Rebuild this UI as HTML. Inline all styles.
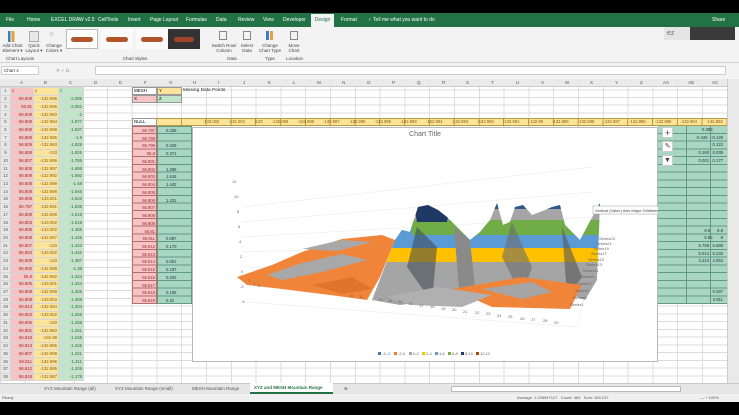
<!DOCTYPE html>
<html><head><meta charset="utf-8"><style>
*{margin:0;padding:0;box-sizing:border-box}
body{width:739px;height:415px;overflow:hidden;background:#000;font-family:"Liberation Sans",sans-serif;position:relative}
.a{position:absolute}
.tab{position:absolute;top:13px;height:14px;color:#fff;font-size:5px;line-height:14px}
.rb{position:absolute;top:27px;left:0;width:739px;height:36px;background:#f3f3f3;border-bottom:1px solid #d4d4d4}
.rl{position:absolute;font-size:4.5px;color:#444;text-align:center;line-height:5px}
.grid{position:absolute;left:0;top:79px;width:727px;height:304px;background:#fff}
table{border-collapse:collapse;position:absolute;left:0;top:87px}
td{height:7.73px;font-size:4.3px;line-height:6px;text-align:right;padding:0 1px;border:1px solid #d6d6d6;white-space:nowrap;overflow:hidden}
td.h{width:10px;background:#e8e8e8;color:#555;text-align:center;padding:0}
td.x{width:23px;background:#f6c4c4;color:#9c2a2a}
td.y{width:25px;background:#fde49b;color:#8a5a00}
td.z{width:25px;background:#c2e4c8;color:#2e6a3a}
</style></head><body>
<div class="a" style="left:0;top:13px;width:739px;height:14px;background:#217346"></div>
<div class="tab" style="left:6px">File</div>
<div class="tab" style="left:27px">Home</div>
<div class="tab" style="left:51px">EXCEL DRAW v2.5</div>
<div class="tab" style="left:98px">CellTools</div>
<div class="tab" style="left:128px">Insert</div>
<div class="tab" style="left:150px">Page Layout</div>
<div class="tab" style="left:186px">Formulas</div>
<div class="tab" style="left:216px">Data</div>
<div class="tab" style="left:238px">Review</div>
<div class="tab" style="left:263px">View</div>
<div class="tab" style="left:283px">Developer</div>
<div class="a" style="left:311px;top:14px;width:23px;height:13px;background:#f3f3f3;color:#217346;font-size:5px;line-height:13px;text-align:center">Design</div>
<div class="tab" style="left:341px">Format</div>
<div class="tab" style="left:368px">♀ Tell me what you want to do</div>
<div class="tab" style="left:712px">Share</div>
<div class="rb"></div>
<div class="a" style="left:8px;top:31px;width:9px;height:11px;background:linear-gradient(90deg,#3a7fc4 30%,#f3f3f3 30%,#f3f3f3 40%,#e6a23c 40%,#e6a23c 70%,#f3f3f3 70%)"></div>
<div class="rl" style="left:0;top:43px;width:25px">Add Chart<br>Element ▾</div>
<div class="a" style="left:29px;top:31px;width:10px;height:11px;border:1px solid #aaa;background:#e8e8e8"></div>
<div class="rl" style="left:24px;top:43px;width:20px">Quick<br>Layout ▾</div>
<div class="a" style="left:48px;top:30px;width:12px;height:12px;color:#4472c4;font-size:8px">⁘</div>
<div class="rl" style="left:43px;top:43px;width:22px">Change<br>Colors ▾</div>
<div class="a" style="left:66px;top:29px;width:32px;height:20px;background:#fff;border:1px solid #bbb"></div>
<div class="a" style="left:71px;top:37px;width:22px;height:5px;background:#b0562a;border-radius:3px"></div>
<div class="a" style="left:101px;top:29px;width:32px;height:20px;background:#fafafa"></div>
<div class="a" style="left:106px;top:37px;width:22px;height:5px;background:#b0562a;border-radius:3px"></div>
<div class="a" style="left:136px;top:29px;width:32px;height:20px;background:#fafafa"></div>
<div class="a" style="left:141px;top:37px;width:22px;height:5px;background:#b0562a;border-radius:3px"></div>
<div class="a" style="left:168px;top:29px;width:32px;height:20px;background:#333"></div>
<div class="a" style="left:174px;top:37px;width:20px;height:5px;background:#a0422a;border-radius:3px"></div>
<div class="rl" style="left:110px;top:56px;width:50px">Chart Styles</div>
<div class="rl" style="left:0;top:56px;width:40px">Chart Layouts</div>
<div class="a" style="left:219px;top:31px;width:8px;height:9px;border:1px solid #888"></div>
<div class="rl" style="left:209px;top:43px;width:30px">Switch Row/<br>Column</div>
<div class="a" style="left:243px;top:31px;width:8px;height:9px;border:1px solid #888"></div>
<div class="rl" style="left:237px;top:43px;width:20px">Select<br>Data</div>
<div class="rl" style="left:222px;top:56px;width:20px">Data</div>
<div class="a" style="left:266px;top:31px;width:7px;height:9px;background:linear-gradient(90deg,#3a7fc4 40%,#f3f3f3 40%,#f3f3f3 60%,#e6a23c 60%)"></div>
<div class="rl" style="left:256px;top:43px;width:28px">Change<br>Chart Type</div>
<div class="rl" style="left:260px;top:56px;width:20px">Type</div>
<div class="a" style="left:290px;top:31px;width:8px;height:9px;border:1px solid #888"></div>
<div class="rl" style="left:284px;top:43px;width:20px">Move<br>Chart</div>
<div class="rl" style="left:282px;top:56px;width:25px">Location</div>
<div class="a" style="left:664px;top:27px;width:26px;height:13px;background:#e4e4e4;font-size:7px;color:#666;line-height:13px;padding-left:3px">ez</div>
<div class="a" style="left:690px;top:27px;width:45px;height:13px;background:#3a3a3a"></div>
<div class="a" style="left:0;top:63px;width:739px;height:16px;background:#f3f3f3"></div>
<div class="a" style="left:1px;top:66px;width:38px;height:9px;background:#fff;border:1px solid #ccc;font-size:4.5px;line-height:8px;padding-left:2px;color:#333">Chart 4</div>
<div class="a" style="left:56px;top:68px;font-size:4.5px;color:#888">✕ ✓ fx</div>
<div class="a" style="left:95px;top:66px;width:631px;height:9px;background:#fff;border:1px solid #ccc"></div>
<div class="grid" style="background-color:#fff;background-image:repeating-linear-gradient(90deg,transparent 0,transparent 23.8px,#dcdcdc 23.8px,#dcdcdc 24.8px),repeating-linear-gradient(0deg,transparent 0,transparent 6.73px,#dcdcdc 6.73px,#dcdcdc 7.73px);background-position:83px 0,0 0"></div>
<div class="a" style="left:0;top:79px;width:727px;height:8px;background:#eaeaea;border-bottom:1px solid #ccc;font-size:4.5px;color:#555;line-height:8px;white-space:nowrap">
<span class="a" style="left:20px">A</span><span class="a" style="left:44px">B</span><span class="a" style="left:69px">C</span><span class="a" style="left:94px">D</span><span class="a" style="left:119px">E</span><span class="a" style="left:144px">F</span><span class="a" style="left:169px">G</span><span class="a" style="left:193px">H</span><span class="a" style="left:218px">I</span><span class="a" style="left:243px">J</span><span class="a" style="left:268px">K</span><span class="a" style="left:293px">L</span><span class="a" style="left:317px">M</span><span class="a" style="left:342px">N</span><span class="a" style="left:367px">O</span><span class="a" style="left:392px">P</span><span class="a" style="left:417px">Q</span><span class="a" style="left:442px">R</span><span class="a" style="left:466px">S</span><span class="a" style="left:491px">T</span><span class="a" style="left:516px">U</span><span class="a" style="left:541px">V</span><span class="a" style="left:565px">W</span><span class="a" style="left:590px">X</span><span class="a" style="left:615px">Y</span><span class="a" style="left:640px">Z</span><span class="a" style="left:663px">AA</span><span class="a" style="left:688px">AB</span><span class="a" style="left:712px">AC</span></div>
<table>
<tr><td class="h">1</td><td class="x" style="text-align:left">x</td><td class="y" style="text-align:left">y</td><td class="z" style="text-align:left">z</td></tr>
<tr><td class="h">2</td><td class="x">56.809</td><td class="y">-132.996</td><td class="z">-2.086</td></tr>
<tr><td class="h">3</td><td class="x">56.81</td><td class="y">-132.995</td><td class="z">-2.052</td></tr>
<tr><td class="h">4</td><td class="x">56.809</td><td class="y">-132.993</td><td class="z">-2</td></tr>
<tr><td class="h">5</td><td class="x">56.808</td><td class="y">-132.994</td><td class="z">-1.977</td></tr>
<tr><td class="h">6</td><td class="x">56.809</td><td class="y">-132.998</td><td class="z">-1.937</td></tr>
<tr><td class="h">7</td><td class="x">56.808</td><td class="y">-132.995</td><td class="z">-1.9</td></tr>
<tr><td class="h">8</td><td class="x">56.809</td><td class="y">-132.993</td><td class="z">-1.829</td></tr>
<tr><td class="h">9</td><td class="x">56.808</td><td class="y">-133</td><td class="z">-1.825</td></tr>
<tr><td class="h">10</td><td class="x">56.807</td><td class="y">-132.996</td><td class="z">-1.785</td></tr>
<tr><td class="h">11</td><td class="x">56.808</td><td class="y">-132.997</td><td class="z">-1.698</td></tr>
<tr><td class="h">12</td><td class="x">56.809</td><td class="y">-132.992</td><td class="z">-1.692</td></tr>
<tr><td class="h">13</td><td class="x">56.808</td><td class="y">-132.999</td><td class="z">-1.68</td></tr>
<tr><td class="h">14</td><td class="x">56.808</td><td class="y">-132.998</td><td class="z">-1.645</td></tr>
<tr><td class="h">15</td><td class="x">56.808</td><td class="y">-133.001</td><td class="z">-1.623</td></tr>
<tr><td class="h">16</td><td class="x">56.797</td><td class="y">-132.991</td><td class="z">-1.539</td></tr>
<tr><td class="h">17</td><td class="x">56.808</td><td class="y">-132.999</td><td class="z">-1.518</td></tr>
<tr><td class="h">18</td><td class="x">56.803</td><td class="y">-133.002</td><td class="z">-1.518</td></tr>
<tr><td class="h">19</td><td class="x">56.806</td><td class="y">-133.002</td><td class="z">-1.455</td></tr>
<tr><td class="h">20</td><td class="x">56.808</td><td class="y">-132.997</td><td class="z">-1.446</td></tr>
<tr><td class="h">21</td><td class="x">56.807</td><td class="y">-133</td><td class="z">-1.443</td></tr>
<tr><td class="h">22</td><td class="x">56.804</td><td class="y">-133.002</td><td class="z">-1.442</td></tr>
<tr><td class="h">23</td><td class="x">56.809</td><td class="y">-133</td><td class="z">-1.387</td></tr>
<tr><td class="h">24</td><td class="x">56.806</td><td class="y">-132.999</td><td class="z">-1.38</td></tr>
<tr><td class="h">25</td><td class="x">56.8</td><td class="y">-132.992</td><td class="z">-1.344</td></tr>
<tr><td class="h">26</td><td class="x">56.805</td><td class="y">-133.001</td><td class="z">-1.344</td></tr>
<tr><td class="h">27</td><td class="x">56.808</td><td class="y">-132.999</td><td class="z">-1.326</td></tr>
<tr><td class="h">28</td><td class="x">56.808</td><td class="y">-133.003</td><td class="z">-1.308</td></tr>
<tr><td class="h">29</td><td class="x">56.813</td><td class="y">-132.994</td><td class="z">-1.304</td></tr>
<tr><td class="h">30</td><td class="x">56.803</td><td class="y">-133.002</td><td class="z">-1.266</td></tr>
<tr><td class="h">31</td><td class="x">56.906</td><td class="y">-133</td><td class="z">-1.258</td></tr>
<tr><td class="h">32</td><td class="x">56.801</td><td class="y">-132.983</td><td class="z">-1.251</td></tr>
<tr><td class="h">33</td><td class="x">56.818</td><td class="y">-132.99</td><td class="z">-1.249</td></tr>
<tr><td class="h">34</td><td class="x">56.813</td><td class="y">-132.986</td><td class="z">-1.226</td></tr>
<tr><td class="h">35</td><td class="x">56.807</td><td class="y">-132.999</td><td class="z">-1.221</td></tr>
<tr><td class="h">36</td><td class="x">56.811</td><td class="y">-132.996</td><td class="z">-1.211</td></tr>
<tr><td class="h">37</td><td class="x">56.812</td><td class="y">-132.995</td><td class="z">-1.209</td></tr>
<tr><td class="h">38</td><td class="x">56.818</td><td class="y">-132.987</td><td class="z">-1.179</td></tr>
</table>
<div class="a" style="left:132px;top:87px;width:25px;height:8px;background:#fff;border:1px solid #999;font-size:4.5px;line-height:6px;padding-left:1px">MESH</div>
<div class="a" style="left:157px;top:87px;width:25px;height:8px;background:#fde49b;border:1px solid #999;font-size:4.5px;line-height:6px;padding-left:1px">Y</div>
<div class="a" style="left:183px;top:87px;font-size:4.8px;line-height:8px;color:#333">Missing Data Points</div>
<div class="a" style="left:132px;top:95px;width:25px;height:8px;background:#f6c4c4;border:1px solid #999;font-size:4.5px;line-height:6px;padding-left:1px">X</div>
<div class="a" style="left:157px;top:95px;width:25px;height:8px;background:#c2e4c8;border:1px solid #999;font-size:4.5px;line-height:6px;padding-left:1px">Z</div>
<div class="a" style="left:132px;top:118px;width:25px;height:8px;background:#fff;border:1px solid #999;font-size:4.5px;line-height:6px;padding-left:1px">NULL</div>
<div class="a" style="left:157px;top:118px;width:570px;height:8px;background:#fde49b;border-top:1px solid #b89a3a;border-bottom:1px solid #b89a3a;background-image:repeating-linear-gradient(90deg,transparent 0,transparent 23.8px,#b89a3a 23.8px,#b89a3a 24.8px);font-size:4.2px;line-height:6px;color:#8a5a00;word-spacing:8px;white-space:nowrap;overflow:hidden">&nbsp;&nbsp;&nbsp;&nbsp;&nbsp;-133.002 -131.001 -133 -132.999 -132.998 -132.997 -132.996 -132.995 -132.993 -132.994 -132.993 -132.992 -132.991 -132.99 -132.989 -132.988 -132.987 -132.986 -132.985 -132.984 -132.983 -132.982 -132.98</div>
<div class="a" style="left:132px;top:126px;width:25px;height:178px;background:#f6c4c4;background-image:repeating-linear-gradient(0deg,transparent 0,transparent 6.73px,#b36b6b 6.73px,#b36b6b 7.73px);border:1px solid #b36b6b;font-size:4.2px;line-height:7.73px;text-align:right;color:#9c2a2a;padding-right:1px">56.797<br>56.798<br>56.799<br>56.8<br>56.801<br>56.802<br>56.803<br>56.804<br>56.805<br>56.806<br>56.807<br>56.808<br>56.809<br>56.81<br>56.811<br>56.812<br>56.813<br>56.814<br>56.815<br>56.816<br>56.817<br>56.818<br>56.819</div>
<div class="a" style="left:157px;top:126px;width:35px;height:178px;background:#a9d6c2;background-image:repeating-linear-gradient(0deg,transparent 0,transparent 6.73px,#5f9a82 6.73px,#5f9a82 7.73px);border:1px solid #5f9a82;font-size:4.2px;line-height:7.73px;color:#234;padding-left:8px">0.339<br><br>0.349<br>0.371<br><br>1.286<br>1.516<br>1.442<br><br>1.431<br><br><br><br><br>0.087<br>0.170<br><br>0.061<br>0.187<br>0.202<br><br>0.156<br>0.22</div>
<div class="a" style="left:658px;top:126px;width:69px;height:178px;background:#a9d6c2;background-image:repeating-linear-gradient(0deg,transparent 0,transparent 6.73px,#5f9a82 6.73px,#5f9a82 7.73px);border-bottom:1px solid #5f9a82;font-size:4.2px;line-height:7.73px;color:#234;text-align:right;padding-right:4px">0.393 &nbsp;&nbsp;&nbsp;&nbsp;&nbsp;&nbsp;&nbsp;&nbsp;<br>-0.426 &nbsp; -0.129<br>0.122<br>0.160 &nbsp; 0.039<br>0.001 &nbsp; 0.177<br><br><br><br><br><br><br><br><br>8.6 &nbsp;&nbsp;&nbsp;&nbsp; 8.8<br>5.85 &nbsp;&nbsp;&nbsp;&nbsp;&nbsp; 8<br>5.765 &nbsp; 5.588<br>5.014 &nbsp; 5.233<br>2.224 &nbsp; 4.053<br><br><br><br>0.287<br>0.811</div>
<div class="a" style="left:686px;top:126px;width:1px;height:178px;background:#5f9a82"></div>
<div class="a" style="left:710px;top:126px;width:1px;height:178px;background:#5f9a82"></div>
<div class="a" style="left:727px;top:79px;width:12px;height:304px;background:#e9e9e9;border-left:1px solid #ccc"></div>
<div class="a" style="left:192px;top:127px;width:466px;height:235px;background:#fff;border:1px solid #b8b8b8"></div>
<div class="a" style="left:192px;top:131px;width:466px;text-align:center;font-size:7px;color:#666">Chart Title</div>
<svg class="a" style="left:192px;top:127px" width="466" height="235" viewBox="0 0 466 235">
<defs><clipPath id="m"><polygon points="180,173 203,113 210,103 218,105 226,80 236,78 246,83 255,90 268,103 278,113 288,105 298,93 305,76 311,98 318,95 323,80 331,78 340,88 353,83 360,80 368,78 373,98 388,113 396,98 408,76 405,153 393,173 368,163 288,163 248,173 208,178"/></clipPath></defs>
<g stroke="#eeeeee" stroke-width="0.7" fill="none">
<line x1="50" y1="80" x2="400" y2="40"/><line x1="50" y1="95" x2="400" y2="65"/><line x1="50" y1="110" x2="400" y2="90"/><line x1="50" y1="125" x2="400" y2="115"/><line x1="50" y1="140" x2="400" y2="140"/><line x1="55" y1="175" x2="385" y2="200"/><line x1="385" y1="200" x2="400" y2="140"/>
</g>
<polygon points="45,150 80,138 110,125 150,112 190,108 203,113 188,150 175,173 138,168 90,162 55,158" fill="#f0853a"/>
<polygon points="75,148 110,136 150,127 175,133 130,145 90,153" fill="#a8a8a8"/>
<polygon points="110,122 150,113 180,115 145,124" fill="#a8a8a8"/>
<polygon points="120,158 160,150 180,162 150,167" fill="#e0742a"/>
<g clip-path="url(#m)">
<rect x="150" y="60" width="270" height="200" fill="#a5a5a5"/>
<rect x="150" y="121" width="270" height="14" fill="#ffc000"/>
<rect x="150" y="108" width="270" height="13" fill="#5b9bd5"/>
<rect x="150" y="93" width="270" height="15" fill="#70ad47"/>
<polygon points="220,70 260,70 255,95 225,95" fill="#203864"/>
<rect x="290" y="60" width="130" height="22" fill="#2e5a8a"/>
<rect x="150" y="60" width="70" height="48" fill="#5b9bd5"/>
<polygon points="262,100 278,113 285,180 268,175" fill="#8a8a8a"/>
<polygon points="225,100 245,120 240,175 215,140" fill="#3a4550" opacity=".55"/>
<polygon points="320,95 340,140 330,170 310,130" fill="#6b6b6b" opacity=".6"/>
<polygon points="370,100 390,150 375,170" fill="#555" opacity=".6"/>
</g>
<polygon points="260,162 330,150 390,158 378,182 300,180" fill="#f0853a"/>
<polygon points="290,162 340,155 360,165 330,172" fill="#a5a5a5"/>
<polygon points="195,170 245,160 300,168 270,180 220,178" fill="#b0b0b0"/>
<g font-size="4px" fill="#666" font-family="Liberation Sans">
<text x="40" y="56">12</text><text x="42" y="71">10</text><text x="45" y="86">8</text><text x="46" y="101">6</text><text x="47" y="116">4</text><text x="48" y="131">2</text><text x="49" y="146">0</text><text x="48" y="161">-2</text><text x="49" y="176">-4</text>
<text x="56" y="155">1</text><text x="61" y="158">2</text><text x="66" y="160">3</text>
<text x="157" y="170">10</text><text x="167" y="171">11</text><text x="186" y="174">13</text><text x="196" y="175">14</text><text x="206" y="176">15</text><text x="216" y="178">16</text><text x="227" y="180">17</text><text x="238" y="181">18</text><text x="249" y="183">19</text><text x="260" y="184">20</text><text x="271" y="186">21</text><text x="283" y="187">22</text><text x="294" y="188">23</text><text x="305" y="190">24</text><text x="316" y="191">25</text><text x="328" y="193">26</text><text x="339" y="194">27</text><text x="351" y="195">28</text><text x="362" y="197">29</text>
<text x="407" y="113">Series23</text><text x="404" y="118">Series21</text><text x="401" y="123">Series19</text><text x="399" y="128">Series17</text><text x="396" y="134">Series15</text><text x="394" y="139">Series13</text><text x="391" y="145">Series11</text><text x="389" y="151">Series9</text><text x="386" y="158">Series7</text><text x="383" y="165">Series5</text><text x="381" y="172">Series3</text><text x="378" y="179">Series1</text>
</g>
<rect x="401" y="79" width="76" height="8" fill="#fff" stroke="#999" stroke-width=".5"/>
<text x="403" y="85" font-size="4px" fill="#444" font-family="Liberation Sans">Vertical (Value) Axis Major Gridlines</text>
<g font-size="4px" fill="#666" font-family="Liberation Sans">
<rect x="186" y="225" width="3" height="3" fill="#4472c4"/><text x="190" y="228">-4--2</text>
<rect x="202" y="225" width="3" height="3" fill="#ed7d31"/><text x="206" y="228">-2-0</text>
<rect x="217" y="225" width="3" height="3" fill="#a5a5a5"/><text x="221" y="228">0-2</text>
<rect x="230" y="225" width="3" height="3" fill="#ffc000"/><text x="234" y="228">2-4</text>
<rect x="243" y="225" width="3" height="3" fill="#5b9bd5"/><text x="247" y="228">4-6</text>
<rect x="256" y="225" width="3" height="3" fill="#70ad47"/><text x="260" y="228">6-8</text>
<rect x="269" y="225" width="3" height="3" fill="#203864"/><text x="273" y="228">8-10</text>
<rect x="284" y="225" width="3" height="3" fill="#9e480e"/><text x="288" y="228">10-12</text>
</g>
</svg>
<div class="a" style="left:662px;top:127px;width:11px;height:11px;background:#fff;border:1px solid #ccc;text-align:center;font-size:9px;line-height:10px;color:#444">+</div>
<div class="a" style="left:662px;top:141px;width:11px;height:11px;background:#fff;border:1px solid #ccc;text-align:center;font-size:7px;line-height:10px;color:#444">✎</div>
<div class="a" style="left:662px;top:155px;width:11px;height:11px;background:#fff;border:1px solid #ccc;text-align:center;font-size:7px;line-height:10px;color:#444">▼</div>
<div class="a" style="left:0;top:383px;width:739px;height:11px;background:#e6e6e6;border-top:1px solid #c8c8c8;font-size:4.5px;line-height:10px;color:#555;white-space:nowrap">
<span class="a" style="left:44px">XYZ Mountain Range (all)</span>
<span class="a" style="left:115px">XYZ Mountain Range (small)</span>
<span class="a" style="left:192px">MESH Mountain Range</span>
<span class="a" style="left:250px;top:-1px;height:11px;width:83px;background:#fff;color:#217346;font-weight:bold;padding-left:4px;border-bottom:2px solid #217346">XYZ and MESH Mountain Range</span>
<span class="a" style="left:344px">⊕</span>
<span class="a" style="left:451px;top:2px;width:230px;height:6px;background:#fff;border:1px solid #bbb"></span></div>
<div class="a" style="left:0;top:394px;width:739px;height:8px;background:#f0f0f0;font-size:4px;line-height:8px;color:#555;white-space:nowrap">
<span class="a" style="left:2px">Ready</span><span class="a" style="left:517px">Average: 1.205947127 &nbsp; Count: 363 &nbsp; Sum: 363.237</span><span class="a" style="left:700px">— + 100%</span></div>
</body></html>
